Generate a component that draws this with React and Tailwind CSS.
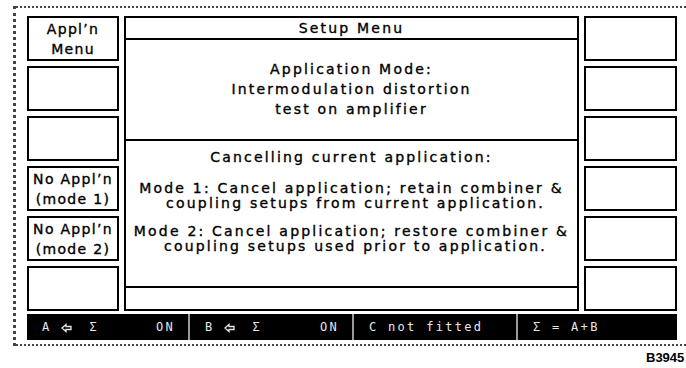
import React from "react";

const font = "font-['DejaVu_Sans',sans-serif] text-[14px] text-black [-webkit-text-stroke:0.35px_#000]";

function SoftKey({ lines = [] }) {
  return (
    <div className={`h-[45px] border-2 border-black flex flex-col items-center justify-center leading-[20px] tracking-[1.3px] ${font}`}>
      {lines.map((l) => (
        <span key={l}>{l}</span>
      ))}
    </div>
  );
}

function Arrow() {
  return (
    <svg width="11" height="10" viewBox="0 0 11 10" className="inline-block">
      <path d="M1 5 L5 1.5 L5 3.5 L10 3.5 L10 6.5 L5 6.5 L5 8.5 Z" fill="none" stroke="#e5e5e5" strokeWidth="1.3" strokeLinejoin="miter" />
    </svg>
  );
}

function StatusSeg({ children, right, className = "" }) {
  return (
    <div className={`h-full flex items-center pl-[15px] pr-[13px] ${className}`}>
      {children}
      {right && <span className="ml-auto">{right}</span>}
    </div>
  );
}

export default function App() {
  const left = [["Appl’n", "Menu"], [], [], ["No Appl’n", "(mode 1)"], ["No Appl’n", "(mode 2)"], []];
  const right = [[], [], [], [], [], []];

  return (
    <div className="w-[686px] h-[368px] bg-white relative overflow-hidden">
      <div className="ml-[13px] mt-[6px] w-[673px] h-[340px] border-l-[3px] border-t-2 border-b-2 border-dotted border-[#444] pl-[11px] pt-[8px]">
        <div className="flex gap-[5px]">
          <div className="w-[92px] flex flex-col gap-[5px]">
            {left.map((l, i) => (
              <SoftKey key={i} lines={l} />
            ))}
          </div>

          <div className={`w-[455px] h-[295px] border-2 border-black flex flex-col tracking-[2.2px] ${font}`}>
            <div className="h-[22px] border-b-2 border-black flex items-center justify-center">Setup Menu</div>
            <div className="h-[101px] border-b-2 border-black flex flex-col items-center justify-center leading-[20px] pb-[2px]">
              <span>Application Mode:</span>
              <span>Intermodulation distortion</span>
              <span>test on amplifier</span>
            </div>
            <div className="h-[147px] border-b-2 border-black flex flex-col items-center pt-[9px] leading-[15px]">
              <span>Cancelling current application:</span>
              <div className="mt-[16px] flex flex-col items-center">
                <span>Mode 1: Cancel application; retain combiner &amp;</span>
                <span className="pl-[8px]">coupling setups from current application.</span>
              </div>
              <div className="mt-[13px] flex flex-col items-center">
                <span>Mode 2: Cancel application; restore combiner &amp;</span>
                <span className="pl-[8px]">coupling setups used prior to application.</span>
              </div>
            </div>
            <div className="flex-1" />
          </div>

          <div className="w-[93px] flex flex-col gap-[5px]">
            {right.map((l, i) => (
              <SoftKey key={i} lines={l} />
            ))}
          </div>
        </div>

        <div className="mt-[3px] w-[650px] h-[26px] bg-black flex font-['DejaVu_Sans_Mono',monospace] text-[12px] tracking-[2.3px] text-[#e8e8e8] font-light">
          <StatusSeg className="w-[163px] border-r-2 border-[#9a9a9a]" right="ON">
            <span>A</span>
            <span className="ml-[9px]"><Arrow /></span>
            <span className="ml-[18px]">Σ</span>
          </StatusSeg>
          <StatusSeg className="w-[164px] border-r-2 border-[#9a9a9a]" right="ON">
            <span>B</span>
            <span className="ml-[9px]"><Arrow /></span>
            <span className="ml-[18px]">Σ</span>
          </StatusSeg>
          <StatusSeg className="w-[164px] border-r-2 border-[#9a9a9a]">
            <span>C not fitted</span>
          </StatusSeg>
          <StatusSeg className="flex-1">
            <span>Σ = A+B</span>
          </StatusSeg>
        </div>
      </div>

      <div className="absolute left-[646px] top-[348px] font-['Liberation_Sans',sans-serif] font-bold text-[13px] text-black whitespace-nowrap">
        B3945
      </div>
    </div>
  );
}
